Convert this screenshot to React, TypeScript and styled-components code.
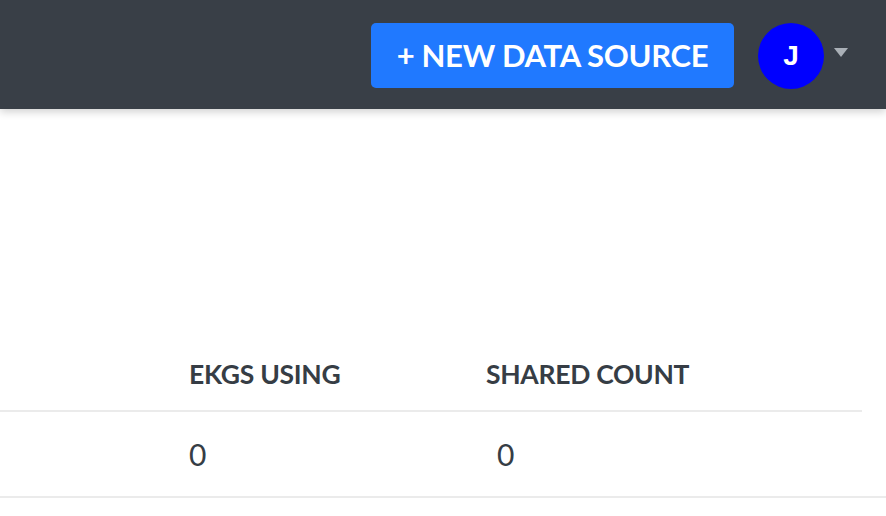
import styled, { createGlobalStyle } from "styled-components";

const GlobalStyle = createGlobalStyle`
  html, body {
    margin: 0;
    padding: 0;
    background: #ffffff;
    font-family: Lato, "Liberation Sans", sans-serif;
    overflow: hidden;
  }
`;

const Page = styled.div`
  width: 886px;
  height: 516px;
  display: flex;
  flex-direction: column;
`;

const TopBar = styled.header`
  height: 109px;
  flex-shrink: 0;
  background-color: #393f47;
  display: flex;
  align-items: center;
  justify-content: flex-end;
  padding-right: 38px;
  box-shadow: 0 3px 8px rgba(0, 0, 0, 0.18);
  position: relative;
  z-index: 1;
`;

const NewButton = styled.button`
  height: 65px;
  width: 363px;
  margin-top: 1px;
  border: none;
  border-radius: 5px;
  background-color: #2079ff;
  color: #ffffff;
  font-family: Lato, "Liberation Sans", sans-serif;
  font-weight: 700;
  font-size: 31px;
  letter-spacing: -0.3px;
  cursor: pointer;
`;

const UserMenu = styled.div`
  display: flex;
  align-items: center;
  margin-left: 24px;
  gap: 10px;
`;

const Avatar = styled.div`
  width: 66px;
  height: 66px;
  border-radius: 50%;
  background-color: #0000ff;
  color: #ffffff;
  display: flex;
  align-items: center;
  justify-content: center;
  font-family: "Liberation Sans", Arial, sans-serif;
  font-weight: 700;
  font-size: 28px;
  margin-top: 3px;
`;

const Caret = styled.div`
  width: 0;
  height: 0;
  border-left: 7.5px solid transparent;
  border-right: 7.5px solid transparent;
  border-top: 9px solid #aab0b7;
  margin-top: -4px;
`;

const Content = styled.main`
  flex: 1;
  padding-top: 232px;
`;

const Table = styled.div`
  display: flex;
  flex-direction: column;
  color: #363d45;
`;

const HeadRow = styled.div`
  display: grid;
  grid-template-columns: 189px 297px 1fr;
  height: 69px;
  align-items: center;
  margin-right: 24px;
  border-bottom: 2px solid #ebebeb;
`;

const BodyRow = styled.div`
  display: grid;
  grid-template-columns: 189px 297px 1fr;
  height: 84px;
  align-items: center;
  border-bottom: 2px solid #ebebeb;
`;

const HeadCell = styled.div`
  font-weight: 700;
  font-size: 26.5px;
  letter-spacing: -0.3px;
  padding-bottom: 4px;
`;

const Cell = styled.div<{ $indent?: number }>`
  font-weight: 400;
  font-size: 30px;
  padding-left: ${(p) => p.$indent ?? 0}px;
`;

export default function App() {
  return (
    <Page>
      <GlobalStyle />
      <TopBar>
        <NewButton>+ NEW DATA SOURCE</NewButton>
        <UserMenu>
          <Avatar>J</Avatar>
          <Caret />
        </UserMenu>
      </TopBar>
      <Content>
        <Table>
          <HeadRow>
            <div />
            <HeadCell>EKGS USING</HeadCell>
            <HeadCell>SHARED COUNT</HeadCell>
          </HeadRow>
          <BodyRow>
            <div />
            <Cell>0</Cell>
            <Cell $indent={11}>0</Cell>
          </BodyRow>
        </Table>
      </Content>
    </Page>
  );
}
